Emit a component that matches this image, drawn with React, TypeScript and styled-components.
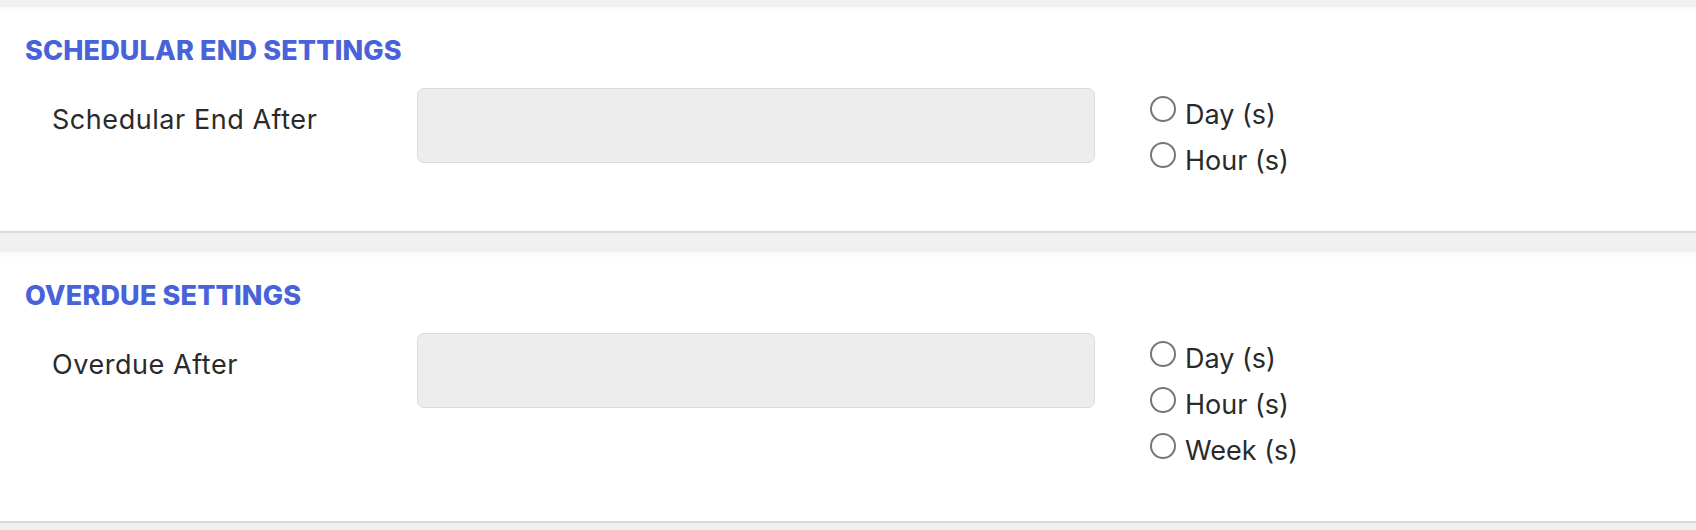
import React from 'react';
import styled, { createGlobalStyle } from 'styled-components';

const GlobalStyle = createGlobalStyle`
  html, body {
    margin: 0;
    padding: 0;
    background: #f0f0f0;
  }
  body {
    font-family: Inter, "Liberation Sans", sans-serif;
    color: #2a2a2a;
  }
`;

const Page = styled.div`
  display: flex;
  flex-direction: column;
  gap: 19px;
  padding-top: 7px;
  min-height: 530px;
  box-sizing: border-box;
  background: #f0f0f0;
`;

const Card = styled.section`
  background: #fff;
  border-bottom: 2px solid #dadada;
  padding: 28px 0 47px 25px;
  box-shadow: inset 0 10px 10px -10px rgba(0, 0, 0, 0.05);
`;

const Heading = styled.h2`
  margin: 0;
  font-size: 27px;
  line-height: 32px;
  font-weight: 800;
  letter-spacing: 0.15px;
  color: #4863d9;
  text-transform: uppercase;
`;

const Row = styled.div`
  display: grid;
  grid-template-columns: 365px 678px auto;
  align-items: start;
  margin-top: 21px;
  padding-left: 27px;
`;

const Label = styled.label`
  padding-top: 16px;
  font-size: 27px;
  line-height: 32px;
  letter-spacing: 0.55px;
  color: #2a2a2a;
`;

const NumberInput = styled.input`
  box-sizing: border-box;
  width: 678px;
  height: 75px;
  margin: 0;
  border: 1px solid #dcdcdc;
  border-radius: 7px;
  background: #ededed;
  outline: none;
`;

const RadioGroup = styled.div`
  display: flex;
  flex-direction: column;
  margin-left: 55px;
  margin-top: 3.5px;
`;

const RadioItem = styled.label`
  display: flex;
  align-items: flex-start;
  gap: 9px;
  font-size: 27px;
  line-height: 46px;
  color: #2a2a2a;
`;

const RadioCircle = styled.input`
  appearance: none;
  -webkit-appearance: none;
  box-sizing: border-box;
  width: 26px;
  height: 26px;
  margin: 4.5px 0 0 0;
  border: 2px solid #777;
  border-radius: 50%;
  background: #fff;
  flex: none;
`;

type Section = {
  title: string;
  label: string;
  name: string;
  options: string[];
};

const sections: Section[] = [
  {
    title: 'Schedular End Settings',
    label: 'Schedular End After',
    name: 'schedular-end',
    options: ['Day (s)', 'Hour (s)'],
  },
  {
    title: 'Overdue Settings',
    label: 'Overdue After',
    name: 'overdue',
    options: ['Day (s)', 'Hour (s)', 'Week (s)'],
  },
];

export default function App() {
  return (
    <>
      <GlobalStyle />
      <Page>
        {sections.map((s) => (
          <Card key={s.name}>
            <Heading>{s.title}</Heading>
            <Row>
              <Label htmlFor={`${s.name}-value`}>{s.label}</Label>
              <NumberInput id={`${s.name}-value`} type="text" />
              <RadioGroup>
                {s.options.map((o) => (
                  <RadioItem key={o}>
                    <RadioCircle type="radio" name={s.name} value={o} />
                    {o}
                  </RadioItem>
                ))}
              </RadioGroup>
            </Row>
          </Card>
        ))}
      </Page>
    </>
  );
}
